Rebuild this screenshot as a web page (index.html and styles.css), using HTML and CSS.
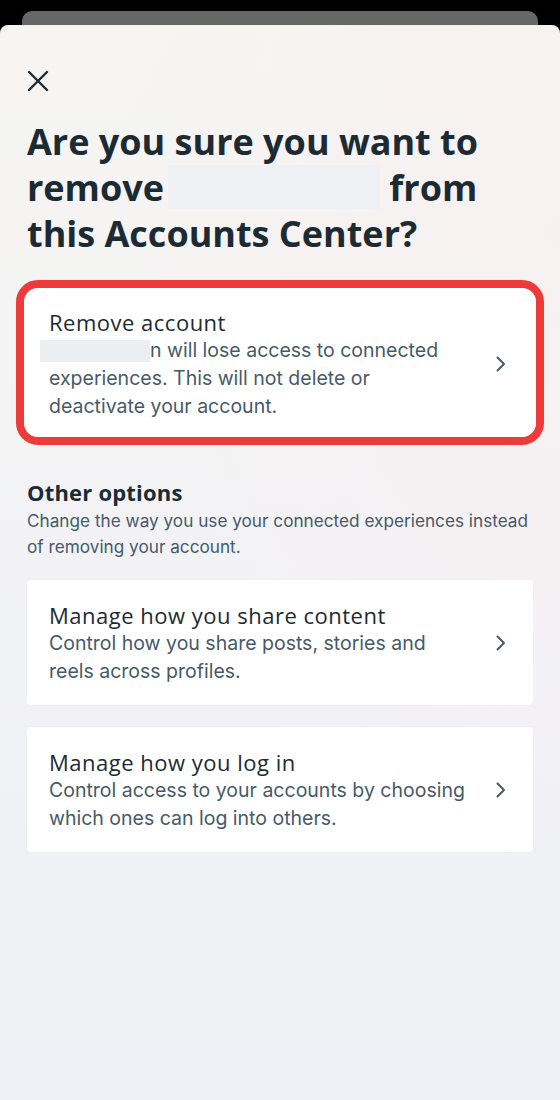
FILE: index.html
```html
<!DOCTYPE html>
<html lang="en">
<head>
<meta charset="utf-8">
<title>Remove account</title>
<link rel="stylesheet" href="styles.css">
</head>
<body>
<div class="back-sheet"></div>
<main class="sheet">
  <button class="close" aria-label="Close">
    <svg width="22" height="22" viewBox="0 0 22 22"><path d="M2 2 L20 20 M20 2 L2 20" stroke="#1c2b33" stroke-width="2.4" stroke-linecap="round" fill="none"/></svg>
  </button>
  <h1 class="title">Are you sure you want to<br>remove<span class="redact-title"></span> from<br>this Accounts Center?</h1>

  <div class="highlight">
    <div class="card card-main">
      <div class="card-text">
        <div class="card-title">Remove account</div>
        <div class="card-desc"><span class="redact-name"></span>n will lose access to connected experiences. This will not delete or deactivate your account.</div>
      </div>
      <svg class="chev" width="12" height="16" viewBox="0 0 12 16"><path d="M2.5 1.5 L9 8 L2.5 14.5" stroke="#465a69" stroke-width="2" fill="none" stroke-linecap="round" stroke-linejoin="round"/></svg>
    </div>
  </div>

  <section class="other">
    <h2 class="other-title">Other options</h2>
    <p class="other-desc">Change the way you use your connected experiences instead of removing your account.</p>
  </section>

  <div class="card">
    <div class="card-text">
      <div class="card-title">Manage how you share content</div>
      <div class="card-desc">Control how you share posts, stories and reels across profiles.</div>
    </div>
    <svg class="chev" width="12" height="16" viewBox="0 0 12 16"><path d="M2.5 1.5 L9 8 L2.5 14.5" stroke="#465a69" stroke-width="2" fill="none" stroke-linecap="round" stroke-linejoin="round"/></svg>
  </div>

  <div class="card">
    <div class="card-text">
      <div class="card-title">Manage how you log in</div>
      <div class="card-desc">Control access to your accounts by choosing which ones can log into others.</div>
    </div>
    <svg class="chev" width="12" height="16" viewBox="0 0 12 16"><path d="M2.5 1.5 L9 8 L2.5 14.5" stroke="#465a69" stroke-width="2" fill="none" stroke-linecap="round" stroke-linejoin="round"/></svg>
  </div>
</main>
</body>
</html>
```

FILE: styles.css
```css
html, body {
  margin: 0;
  padding: 0;
  background: #000;
}
body {
  width: 560px;
  height: 1100px;
  overflow: hidden;
  font-family: "Inter", "Roboto", sans-serif;
  color: #1c2b33;
}
.back-sheet {
  margin: 11px 22px 0;
  height: 14px;
  background: #666866;
  border-radius: 10px 10px 0 0;
}
.sheet {
  height: 1075px;
  box-sizing: border-box;
  padding: 45px 27px 0;
  border-radius: 8px 8px 0 0;
  background:
    radial-gradient(ellipse at 100% 15%, rgba(250, 238, 240, 0.6), rgba(250, 238, 240, 0) 55%),
    linear-gradient(180deg, #f6f5f2 0%, #f3f3f4 40%, #eef0f5 100%);
}
.close {
  display: block;
  width: 22px;
  height: 22px;
  padding: 0;
  border: 0;
  background: none;
}
.close svg { display: block; }
.title {
  margin: 27px 0 0;
  font-family: "Open Sans", sans-serif;
  font-weight: 700;
  font-size: 36px;
  line-height: 46px;
  color: #1c2b33;
}
.redact-title {
  display: inline-block;
  width: 212px;
  height: 44px;
  margin-left: 4px;
  vertical-align: top;
  background: #eff0f3;
}
.highlight {
  margin: 23px -11px 0;
  border: 8px solid #ef3a3a;
  border-radius: 22px;
  overflow: hidden;
}
.card {
  display: flex;
  align-items: center;
  gap: 28px;
  background: #fff;
  border-radius: 4px;
  padding: 21px 26px 20px 22px;
  margin-top: 22px;
  box-shadow: 0 0 2px rgba(0,0,0,0.03);
}
.card-main {
  margin: 0;
  border-radius: 14px;
  padding: 20px 29px 17px 25px;
  box-shadow: none;
}
.card-text { flex: 1; min-width: 0; }
.card-title {
  font-family: "Open Sans", sans-serif;
  font-weight: 500;
  font-size: 22px;
  letter-spacing: 0.5px;
  line-height: 28px;
  color: #1c2b33;
}
.card-desc {
  font-size: 19.5px;
  line-height: 28px;
  color: #465a69;
}
.redact-name {
  display: inline-block;
  width: 110px;
  height: 22px;
  vertical-align: -5px;
  margin-left: -9px;
  background: #eceef0;
}
.chev { flex: none; display: block; }
.other { margin-top: 33px; }
.other-title {
  margin: 0;
  font-family: "Open Sans", sans-serif;
  font-weight: 700;
  font-size: 22px;
  letter-spacing: 0.2px;
  line-height: 28px;
  color: #1c2b33;
}
.other-desc {
  margin: 2px 0 20px;
  font-size: 17.2px;
  line-height: 26px;
  color: #465a69;
}
.other + .card { margin-top: 0; }
```
